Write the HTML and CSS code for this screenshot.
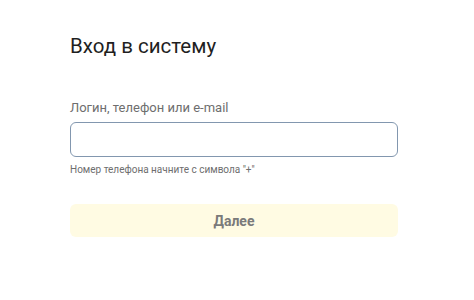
FILE: index.html
```html
<!DOCTYPE html>
<html lang="ru">
<head>
<meta charset="utf-8">
<link rel="stylesheet" href="styles.css">
</head>
<body>
<div class="page">
  <h1 class="title">Вход в систему</h1>
  <div class="field">
    <label class="label">Логин, телефон или e-mail</label>
    <div class="input"></div>
    <div class="hint">Номер телефона начните с символа "+"</div>
  </div>
  <div class="button">Далее</div>
</div>
</body>
</html>
```
FILE: styles.css
```css
* { box-sizing: border-box; }
html, body { margin: 0; padding: 0; background: #fff; }
body { font-family: Roboto, "Noto Sans", sans-serif; }
.page {
  width: 474px;
  height: 300px;
  padding: 34px 76px 0 70px;
}
.title {
  margin: 0;
  font-size: 20.5px;
  font-weight: 400;
  line-height: 24px;
  color: #1f1f1f;
}
.field {
  margin-top: 42px;
  display: flex;
  flex-direction: column;
}
.label {
  font-size: 13px;
  line-height: 16px;
  color: #6e6e6e;
}
.input {
  margin-top: 6px;
  height: 35px;
  border: 1.5px solid #8297af;
  border-radius: 6px;
}
.hint {
  margin-top: 6px;
  font-size: 10px;
  line-height: 14px;
  color: #6e6e6e;
}
.button {
  margin-top: 27px;
  height: 33px;
  border-radius: 6px;
  background: #fffbe3;
  color: #7a7a7a;
  font-size: 14px;
  font-weight: 700;
  display: flex;
  align-items: center;
  justify-content: center;
}
```
